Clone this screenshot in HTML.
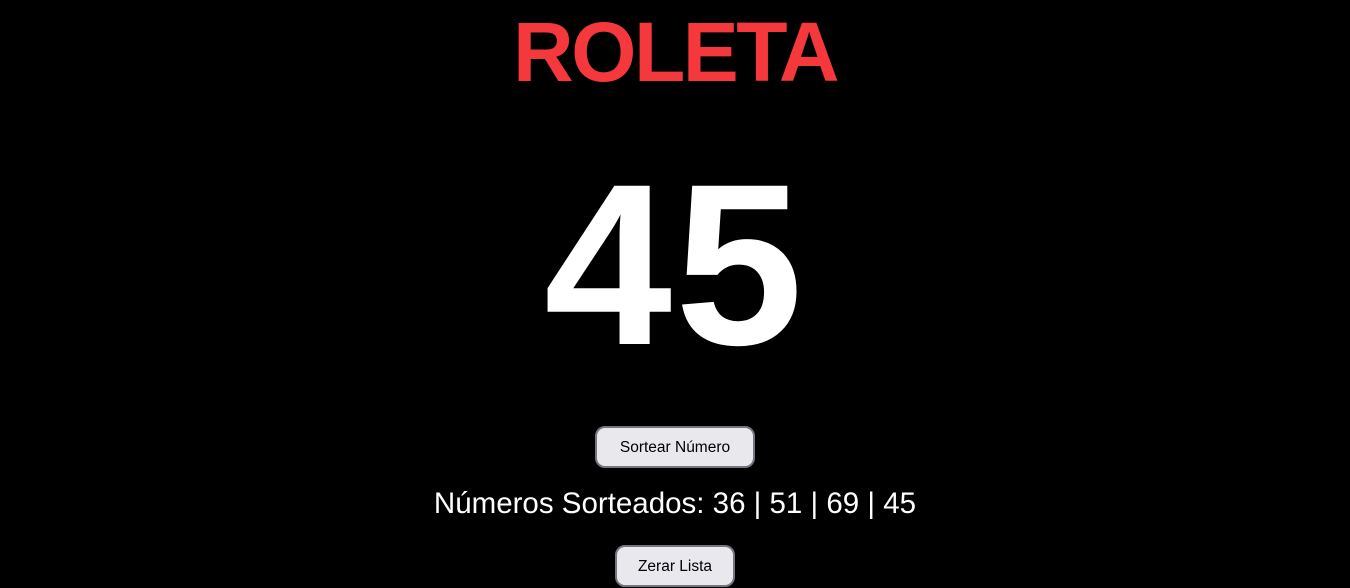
<!DOCTYPE html>
<html><head><meta charset="utf-8"><style>
html,body{margin:0;background:#000;width:1350px;height:588px;overflow:hidden;font-family:"Liberation Sans",sans-serif;color:#fff}
.t{position:absolute;left:0;width:1350px;text-align:center;white-space:nowrap}
.title{top:4px;font-size:84px;font-weight:bold;color:#f5383b;line-height:96px;letter-spacing:-2.5px}
.num{top:145px;font-size:230px;font-weight:bold;line-height:240px;letter-spacing:3px}
.btn{position:absolute;background:#e9e8ed;border:2px solid #76757f;border-radius:10px;box-sizing:border-box;color:#000;font-size:15.5px;text-align:center}
.list{top:484px;font-size:29.5px;line-height:40px}
</style></head><body>
<div class="t title">ROLETA</div>
<div class="t num">45</div>
<div class="btn" style="left:595px;top:426px;width:160px;height:42px;line-height:40px">Sortear Número</div>
<div class="t list">Números Sorteados: 36 | 51 | 69 | 45</div>
<div class="btn" style="left:615px;top:545px;width:120px;height:42px;line-height:40px">Zerar Lista</div>
</body></html>
